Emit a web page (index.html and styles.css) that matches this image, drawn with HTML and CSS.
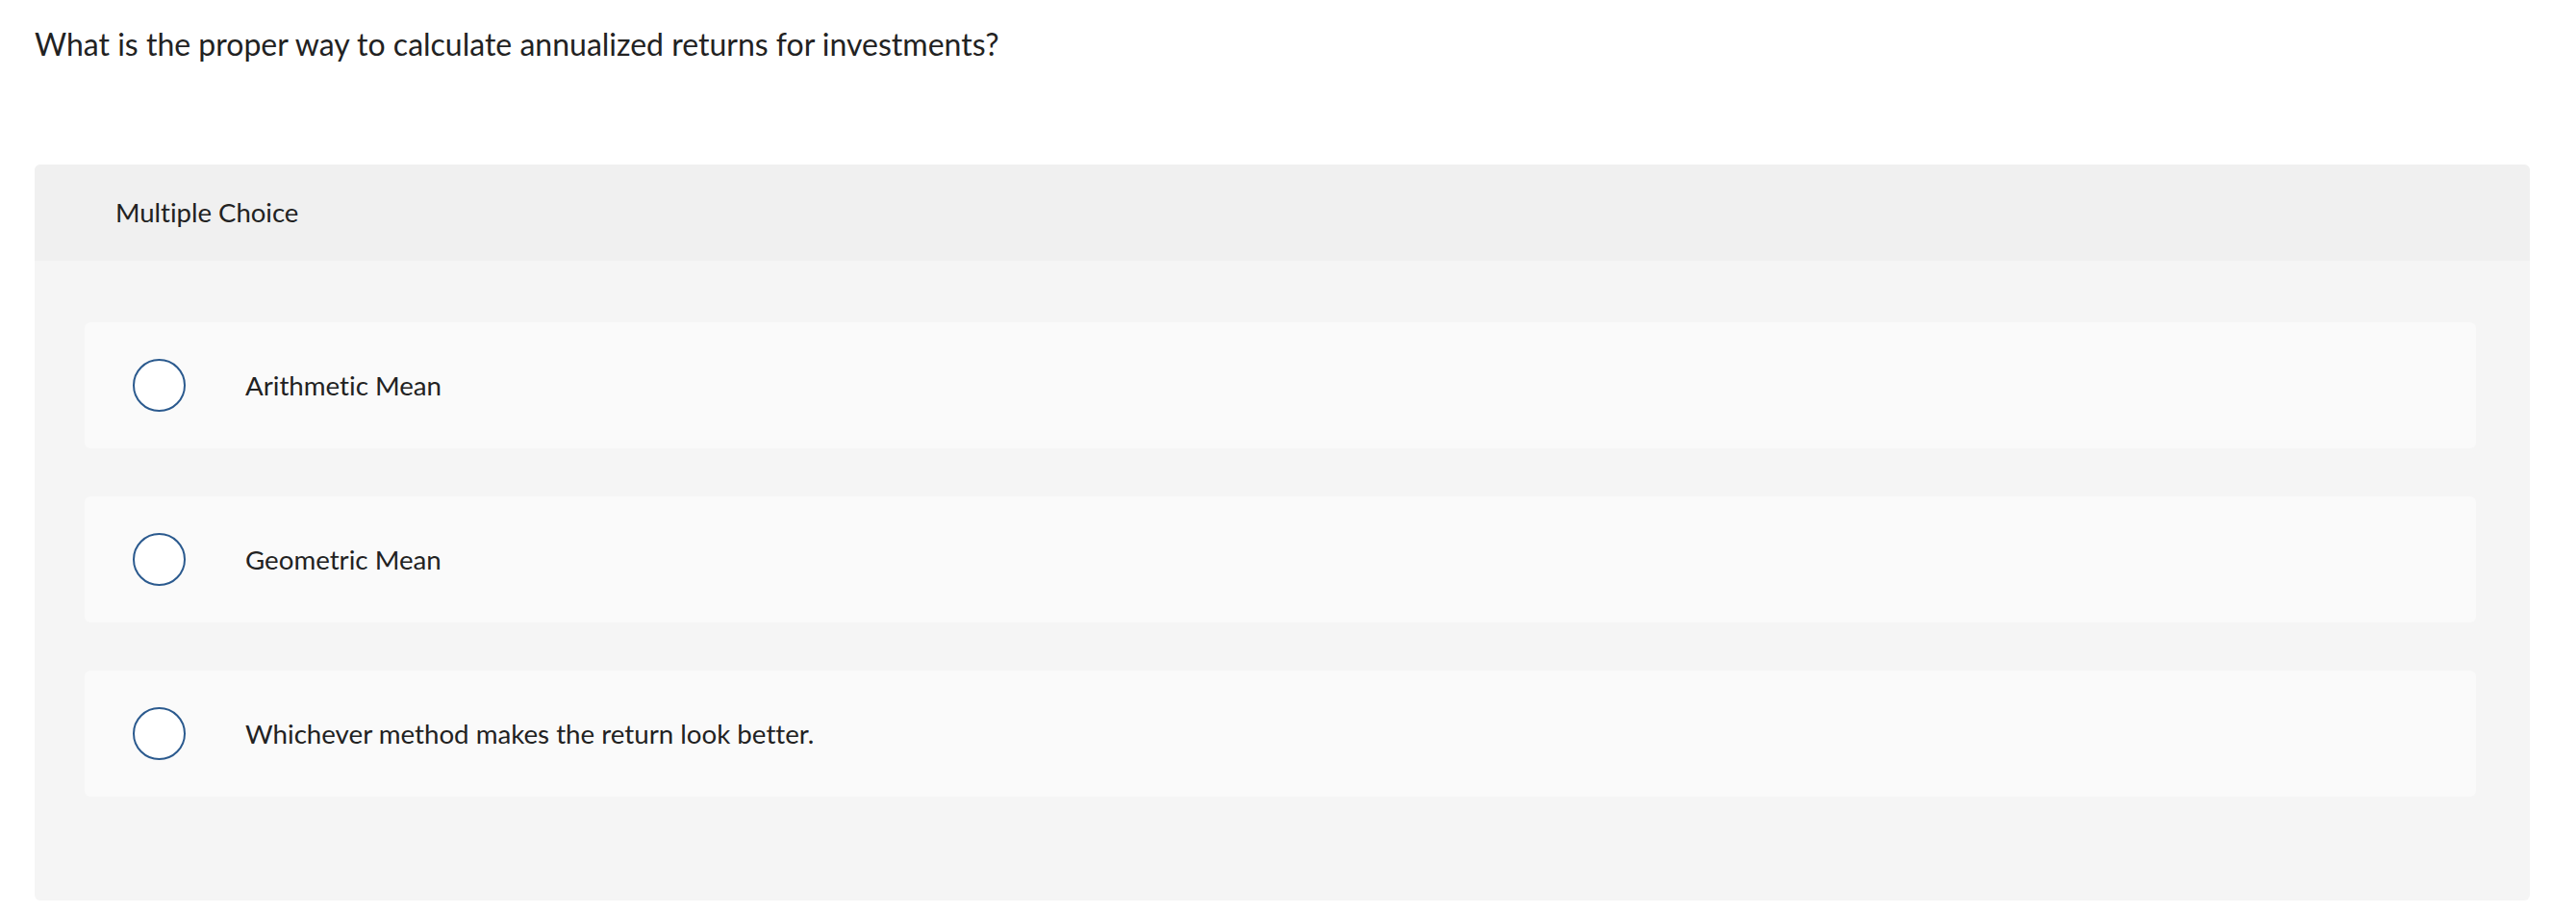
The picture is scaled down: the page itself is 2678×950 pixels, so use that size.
FILE: index.html
```html
<!DOCTYPE html>
<html lang="en">
<head>
    <meta charset="UTF-8">
    <meta name="viewport" content="width=device-width, initial-scale=1.0">
    <title>Question</title>
    <link rel="stylesheet" href="styles.css">
</head>
<body>
    <div class="question">
        <p class="prompt">What is the proper way to calculate annualized returns for investments?</p>

        <div class="choice-panel">
            <div class="choice-header">Multiple Choice</div>
            <div class="choice-list">
                <label class="choice">
                    <span class="radio"></span>
                    <span class="choice-text">Arithmetic Mean</span>
                </label>
                <label class="choice">
                    <span class="radio"></span>
                    <span class="choice-text">Geometric Mean</span>
                </label>
                <label class="choice">
                    <span class="radio"></span>
                    <span class="choice-text">Whichever method makes the return look better.</span>
                </label>
            </div>
        </div>
    </div>
</body>
</html>
```

FILE: styles.css
```css
* {
    margin: 0;
    padding: 0;
    box-sizing: border-box;
    font-family: 'Lato', 'Noto Sans', sans-serif;
    font-variant-ligatures: none;
}

body {
    background-color: #ffffff;
    color: #222222;
}

.question {
    padding: 0 48px 0 36px;
}

.prompt {
    font-size: 32px;
    line-height: 40px;
    padding-top: 26px;
    height: 171px;
}

.choice-panel {
    background: #f5f5f5;
    border-radius: 6px;
    overflow: hidden;
}

.choice-header {
    background: #f0f0f0;
    height: 100px;
    padding-left: 84px;
    padding-bottom: 2px;
    display: flex;
    align-items: center;
    font-size: 27.5px;
}

.choice-list {
    display: flex;
    flex-direction: column;
    gap: 50px;
    padding: 64px 56px 108px 52px;
}

.choice {
    background: #fafafa;
    border-radius: 6px;
    height: 131px;
    display: flex;
    align-items: center;
    padding-left: 50px;
    gap: 62px;
    cursor: pointer;
}

.radio {
    width: 55px;
    height: 55px;
    border: 2px solid #2b5a8e;
    border-radius: 50%;
    background: #ffffff;
    flex-shrink: 0;
}

.choice-text {
    font-size: 27.7px;
}
```
